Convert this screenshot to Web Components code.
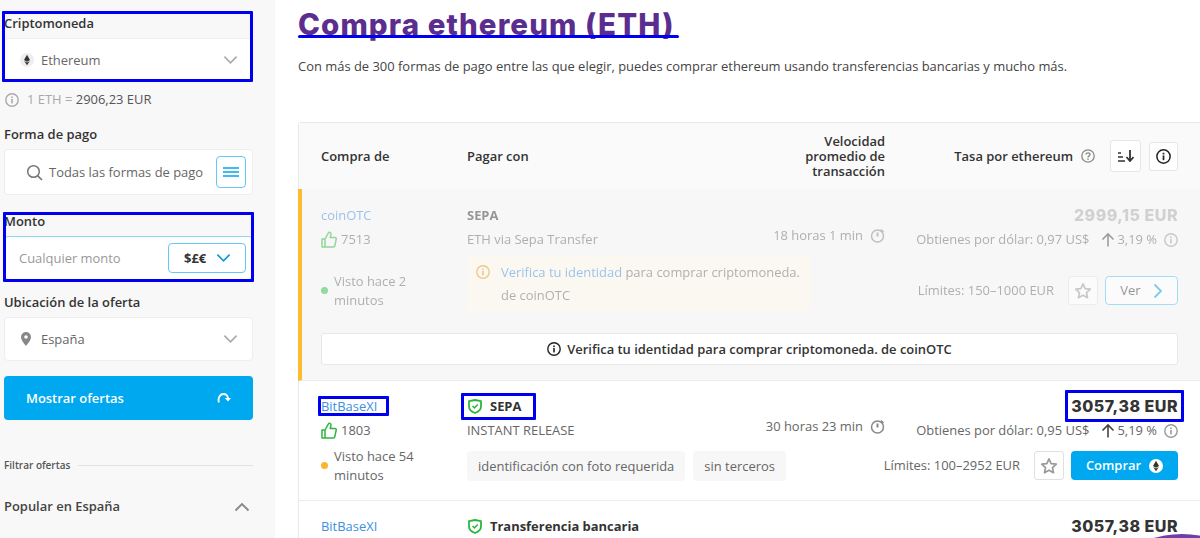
<!DOCTYPE html>
<html lang="es">
<head>
<meta charset="utf-8">
<title>Compra ethereum (ETH)</title>
<style>
  html, body { margin: 0; height: 538px; overflow: hidden; background: #fff; }
  body { font: 12.950px/19px "Open Sans", "Liberation Sans", sans-serif; color: #333; }
</style>
</head>
<body>
<p2p-page>
  <filter-sidebar slot="side"></filter-sidebar>

  <offer-list slot="main">
    <offer-row faded name="coinOTC" score="7513" seen="Visto hace 2 minutos" dot="#25c149"
      method="SEPA" detail="ETH via Sepa Transfer" speed="18 horas 1 min"
      price="2999,15 EUR" usd="0,97 US$" pct="3,19 %" limits="150–1000 EUR" action="Ver">
      <verify-notice slot="extra"></verify-notice>
      <verify-strip slot="strip"></verify-strip>
    </offer-row>
    <offer-row name="BitBaseXI" score="1803" seen="Visto hace 54 minutos" dot="#fbb531"
      shield method="SEPA" detail="INSTANT RELEASE" speed="30 horas 23 min"
      price="3057,38 EUR" usd="0,95 US$" pct="5,19 %" limits="100–2952 EUR" action="Comprar">
      <offer-tag slot="extra">identificación con foto requerida</offer-tag>
      <offer-tag slot="extra">sin terceros</offer-tag>
    </offer-row>
    <!-- only the first line of this row is inside the window -->
    <offer-row name="BitBaseXI" shield method="Transferencia bancaria" price="3057,38 EUR"></offer-row>
  </offer-list>
</p2p-page>

<!-- blue annotation marks drawn over the screenshot -->
<mark-box style="left:2px;top:11px;width:251px;height:71px"></mark-box>
<mark-box style="left:3px;top:212px;width:251px;height:70px"></mark-box>
<mark-box style="left:318px;top:396px;width:71px;height:20px"></mark-box>
<mark-box style="left:461px;top:393px;width:75px;height:27px"></mark-box>
<mark-box style="left:1065px;top:390px;width:119px;height:32px"></mark-box>
<mark-box line style="left:298px;top:35px;width:381px;height:3px"></mark-box>
<chat-blob></chat-blob>

<script>
const ICONS = {
  chevron: (c) => `<svg width="15" height="10" viewBox="0 0 16 10"><path d="M1.500 1.500 8 8l6.500-6.500" fill="none" stroke="${c}" stroke-width="1.800"/></svg>`,
  chevronUp: (c) => `<svg width="16" height="10" viewBox="0 0 16 10"><path d="M1.500 8.500 8 2l6.500 6.500" fill="none" stroke="${c}" stroke-width="1.900"/></svg>`,
  eth: (bg, fg) => `<svg width="14" height="14" viewBox="0 0 14 14"><circle cx="7" cy="7" r="7" fill="${bg}"/><path d="M7 1.800 10 7 7 8.800 4 7z" fill="${fg}"/><path d="M7 9.600 9.800 8 7 12.200 4.200 8z" fill="${fg}"/></svg>`,
  info: (c, s = 14) => `<svg width="${s}" height="${s}" viewBox="0 0 14 14"><circle cx="7" cy="7" r="6.200" fill="none" stroke="${c}" stroke-width="1.400"/><rect x="6.200" y="6" width="1.600" height="4.400" fill="${c}"/><rect x="6.200" y="3.500" width="1.600" height="1.600" fill="${c}"/></svg>`,
  thumb: `<svg width="16" height="17" viewBox="0 0 16 17"><path d="M1 8h3v8H1zM4 8l3.600-6.400c.2-.5 2.400-.6 2.400 1.500 0 1-.4 2.300-.8 3.400h4.600c1 0 1.600.8 1.400 1.700l-1.400 6.600c-.2.8-.7 1.200-1.500 1.200H4" fill="none" stroke="#2cb53e" stroke-width="1.500" stroke-linejoin="round"/></svg>`,
  shield: `<svg width="14" height="15" viewBox="0 0 14 15"><path d="M1 2.200 7 1l6 1.200v5.300c0 3-2.600 5.200-6 6.500-3.400-1.300-6-3.500-6-6.500z" fill="none" stroke="#2cb53e" stroke-width="1.800" stroke-linejoin="round"/><path d="M4.500 7 6.400 8.900 9.700 5.500" fill="none" stroke="#2cb53e" stroke-width="1.500"/></svg>`,
  timer: `<svg width="15" height="15" viewBox="0 0 15 15"><circle cx="7.500" cy="8" r="6" fill="none" stroke="#888" stroke-width="1.500"/><path d="M7.500 4.500V8.500" stroke="#888" stroke-width="2"/><path d="M11 1.500 13.500 4" stroke="#888" stroke-width="1.500"/></svg>`,
  up: `<svg width="14" height="15" viewBox="0 0 14 15"><path d="M7 14.500V2M1.500 7.500 7 2l5.500 5.500" fill="none" stroke="#444" stroke-width="1.600"/></svg>`,
  star: `<svg width="18" height="18" viewBox="0 0 16 16"><path d="M8 1.700 9.900 5.900 14.500 6.400 11.100 9.500 12 14 8 11.700 4 14 4.900 9.500 1.500 6.400 6.100 5.900z" fill="none" stroke="#999" stroke-width="1.500" stroke-linejoin="round"/></svg>`,
  right: `<svg width="10" height="16" viewBox="0 0 10 16"><path d="M1.500 1.500 8 8l-6.500 6.500" fill="none" stroke="#0a9be0" stroke-width="1.800"/></svg>`
};

class MarkBox extends HTMLElement {
  constructor() {
    super();
    this.attachShadow({ mode: "open" });
    this.shadowRoot.innerHTML = `
      <style>
        :host { position: absolute; box-sizing: border-box; border: 3px solid #0000f0; border-radius: 1px; z-index: 10; }
        :host([line]) { border: 0; background: #0000f0; border-radius: 2px; }
      </style>`;
  }
}
customElements.define("mark-box", MarkBox);

class ChatBlob extends HTMLElement {
  constructor() {
    super();
    this.attachShadow({ mode: "open" });
    this.shadowRoot.innerHTML = `
      <style>
        :host { position: absolute; left: 1137px; top: 534px; width: 90px; height: 40px; border-radius: 50%; background: #6f3fa8; z-index: 9; }
      </style>`;
  }
}
customElements.define("chat-blob", ChatBlob);

class P2pPage extends HTMLElement {
  constructor() {
    super();
    this.attachShadow({ mode: "open" });
    this.shadowRoot.innerHTML = `
      <style>
        :host { display: flex; width: 1200px; height: 538px; overflow: hidden; }
        .side { flex: 0 0 275px; background: #f8f8f8; display: block; }
        .main { flex: 1; min-width: 0; padding-left: 23px; }
        h1 {
          margin: 0; height: 48px; color: #5b2d8e;
          font: 800 29.500px/48px Inter, "Liberation Sans", sans-serif; letter-spacing: 1.100px;
        }
        p { margin: 8px 0 46px; line-height: 20px; color: #444; white-space: nowrap; }
      </style>
      <div class="side"><slot name="side"></slot></div>
      <div class="main">
        <h1>Compra ethereum (ETH)</h1>
        <p>Con más de 300 formas de pago entre las que elegir, puedes comprar ethereum usando transferencias bancarias y mucho más.</p>
        <slot name="main"></slot>
      </div>`;
  }
}
customElements.define("p2p-page", P2pPage);

class FilterSidebar extends HTMLElement {
  constructor() {
    super();
    this.attachShadow({ mode: "open" });
    this.shadowRoot.innerHTML = `
      <style>
        :host { display: flex; flex-direction: column; box-sizing: border-box; height: 538px; padding: 14px 22px 0 4px; }
        label { display: block; height: 19px; font-weight: 600; color: #333; }
        .field {
          box-sizing: border-box; display: flex; align-items: center; height: 44px; margin-top: 5px;
          background: #fff; border: 1px solid #eee; border-radius: 4px; color: #666;
        }
        .field svg { flex: none; }
        .coin { padding: 0 14px 0 15px; }
        .coin span, .place span { flex: 1; margin-left: 7px; }
        .rate { display: flex; align-items: center; gap: 8px; height: 19px; margin-top: 8px; padding-left: 1px; color: #aaa; }
        .rate b { font-weight: 400; color: #555; }
        .pay { height: 46px; padding: 0 6px 0 21px; }
        .pay span { flex: 1; margin-left: 6px; white-space: nowrap; }
        .mini {
          box-sizing: border-box; width: 30px; height: 32px; border: 1px solid #66c8f5; border-radius: 4px;
          display: flex; align-items: center; justify-content: center;
        }
        .amount { padding: 0 6px 0 14px; border-color: #8ad8f8; color: #999; }
        .amount span { flex: 1; }
        .cur {
          box-sizing: border-box; width: 78px; height: 30px; border: 1px solid #66c8f5; border-radius: 4px;
          display: flex; align-items: center; justify-content: space-between; padding: 0 14px 0 15px;
          color: #333; font-weight: 700;
        }
        .place { padding: 0 14px 0 16px; }
        .show {
          display: flex; align-items: center; justify-content: space-between; height: 44px; margin-top: 15px; padding: 0 22px;
          background: #00a8ef; color: #fff; font-weight: 600; border-radius: 4px;
        }
        .sep { display: flex; align-items: center; gap: 8px; height: 16px; margin-top: 37px; font-size: 10px; font-weight: 600; color: #555; }
        .sep i { flex: 1; height: 1px; background: #e4e4e4; }
        .pop { display: flex; align-items: center; justify-content: space-between; margin-top: 24px; padding-right: 3px; font-weight: 600; color: #444; }
      </style>
      <label>Criptomoneda</label>
      <div class="field coin">${ICONS.eth("#eee", "#333")}<span>Ethereum</span>${ICONS.chevron("#aaa")}</div>
      <div class="rate">${ICONS.info("#aaa")}<span>1 ETH = <b>2906,23 EUR</b></span></div>
      <label style="margin-top:16px">Forma de pago</label>
      <div class="field pay">
        <svg width="17" height="17" viewBox="0 0 17 17"><circle cx="7.500" cy="7.500" r="5.800" fill="none" stroke="#777" stroke-width="1.500"/><path d="M11.800 11.800 16 16" stroke="#777" stroke-width="1.700"/></svg>
        <span>Todas las formas de pago</span>
        <div class="mini"><svg width="16" height="10" viewBox="0 0 16 10"><path d="M0 1h16M0 5h16M0 9h16" stroke="#00a8ef" stroke-width="1.600"/></svg></div>
      </div>
      <label style="margin-top:17px">Monto</label>
      <div class="field amount"><span>Cualquier monto</span><div class="cur">$£€ ${ICONS.chevron("#0a9be0")}</div></div>
      <label style="margin-top:13px">Ubicación de la oferta</label>
      <div class="field place">
        <svg width="10" height="14" viewBox="0 0 10 14"><path fill-rule="evenodd" d="M5 0a5 5 0 0 1 5 5c0 3.500-5 9-5 9S0 8.500 0 5a5 5 0 0 1 5-5zm0 3.200a1.800 1.800 0 1 0 0 3.600 1.800 1.800 0 0 0 0-3.600z" fill="#888"/></svg>
        <span style="margin-left:10px">España</span>${ICONS.chevron("#aaa")}
      </div>
      <div class="show"><span>Mostrar ofertas</span>
        <svg width="14" height="13" viewBox="0 0 14 13"><path d="M2 10.500C.6 7 2.600 2 6.500 2c2.500 0 4 1.600 4.500 4" fill="none" stroke="#fff" stroke-width="1.800"/><path d="M7.800 6h6.200l-3 3.400z" fill="#fff"/></svg>
      </div>
      <div class="sep"><span>Filtrar ofertas</span><i></i></div>
      <div class="pop"><span>Popular en España</span>${ICONS.chevronUp("#888")}</div>`;
  }
}
customElements.define("filter-sidebar", FilterSidebar);

class OfferList extends HTMLElement {
  constructor() {
    super();
    this.attachShadow({ mode: "open" });
    this.shadowRoot.innerHTML = `
      <style>
        :host { display: block; border-top: 1px solid #e8e8e8; border-top-left-radius: 4px; }
        .head {
          display: grid; grid-template-columns: 146px 418px minmax(0, 1fr); align-items: center;
          height: 66px; padding: 0 22px; border-left: 1px solid #e8e8e8; background: #fafafa;
          font-weight: 600; color: #333;
        }
        .speed { justify-self: end; text-align: right; line-height: 15px; width: 90px; }
        .rate { display: flex; align-items: center; justify-content: flex-end; }
        .q { margin: 0 15px 0 8px; display: flex; }
        .btn {
          box-sizing: border-box; display: flex; align-items: center; justify-content: center;
          width: 29px; height: 29px; background: #fff; border: 1px solid #e6e6e6; border-radius: 3px;
        }
        .sort { width: 31px; height: 32px; margin-right: 8px; }
      </style>
      <div class="head">
        <span>Compra de</span>
        <div style="display:flex;justify-content:space-between;align-items:center"><span>Pagar con</span><span class="speed">Velocidad promedio de transacción</span></div>
        <div class="rate">
          <span>Tasa por ethereum</span>
          <span class="q"><svg width="14" height="14" viewBox="0 0 14 14"><circle cx="7" cy="7" r="6.200" fill="none" stroke="#888" stroke-width="1.300"/><path d="M5 5.500C5 3.300 9 3.300 9 5.500 9 7 7 6.800 7 8.500" fill="none" stroke="#888" stroke-width="1.300"/><rect x="6.300" y="9.500" width="1.400" height="1.400" fill="#888"/></svg></span>
          <span class="btn sort"><svg width="16" height="12" viewBox="0 0 16 12"><path d="M0 3h3M0 7h5M0 11h7" stroke="#333" stroke-width="1.500"/><path d="M12 0v10M8.500 7l3.500 4 3.500-4" fill="none" stroke="#333" stroke-width="1.800"/></svg></span>
          <span class="btn">${ICONS.info("#222", 15)}</span>
        </div>
      </div>
      <slot></slot>`;
  }
}
customElements.define("offer-list", OfferList);

class OfferRow extends HTMLElement {
  connectedCallback() {
    this.attachShadow({ mode: "open" });
    const a = (n) => this.getAttribute(n) || "";
    const isBuy = a("action") === "Comprar";
    const actionBtn = isBuy
      ? `<span class="go">Comprar ${ICONS.eth("#fff", "#333")}</span>`
      : `<span class="go ver">Ver ${ICONS.right}</span>`;
    this.shadowRoot.innerHTML = `
      <style>
        :host {
          display: block; padding: 16px 22px; border-left: 1px solid #e8e8e8; border-bottom: 1px solid #ececec;
          background: #fff; color: #666;
        }
        :host([faded]) { padding: 17px 22px 15px 19px; border-left: 4px solid #fbbc2e; background: #f7f7f7; }
        .cols { display: grid; grid-template-columns: 146px 418px minmax(0, 1fr); }
        :host([faded]) .cols { opacity: .5; }
        .seller { display: flex; flex-direction: column; }
        .name { color: #3d8fe0; }
        .score { display: flex; align-items: center; gap: 4px; margin-top: 5px; height: 19px; }
        .seen { display: flex; align-items: center; gap: 6px; margin-top: auto; padding-top: 7px; line-height: 18.500px; width: 112px; }
        .dot { flex: none; width: 7px; height: 7px; border-radius: 50%; background: var(--dot); }
        .pay { display: grid; grid-template-columns: 1fr auto; grid-template-rows: auto auto; }
        .method { display: flex; align-items: center; gap: 8px; font-weight: 700; color: #333; }
        .method svg { margin-left: 1px; }
        .detail { margin-top: 5px; min-height: 19px; }
        .speed { display: flex; align-items: center; gap: 7px; margin-top: 20px; height: 19px; white-space: nowrap; grid-row: 1; grid-column: 2; }
        .extra { grid-row: 2; grid-column: 1 / 3; margin-top: 7px; display: flex; gap: 8px; }
        :host([faded]) .extra { margin-bottom: -2px; }
        .rate { display: flex; flex-direction: column; align-items: flex-end; }
        .price { font: 800 16px/19px Inter, "Liberation Sans", sans-serif; letter-spacing: .5px; color: #333; white-space: nowrap; }
        :host([faded]) .price { color: #aaa; }
        .usd { display: flex; align-items: center; margin-top: 5px; height: 19px; white-space: nowrap; }
        .usd .up { margin: 0 2px 0 12px; display: flex; }
        .usd .i { margin-left: 7px; display: flex; }
        .acts { display: flex; align-items: center; margin-top: auto; margin-bottom: 4px; white-space: nowrap; }
        .star {
          box-sizing: border-box; width: 30px; height: 29px; margin: 0 7px 0 14px; background: #fff;
          border: 1px solid #e0e0e0; border-radius: 3px; display: flex; align-items: center; justify-content: center;
        }
        .go {
          box-sizing: border-box; height: 29px; border-radius: 4px; display: flex; align-items: center; justify-content: center; gap: 8px;
          width: ${isBuy ? 107 : 73}px; font-weight: 600;
          ${isBuy ? "background:#00a8ef;color:#fff;" : "background:#fff;border:1px solid #4fc0f2;color:#333;"}
        }
        .go.ver { gap: 12px; font-weight: 400; }
      </style>
      <div class="cols" style="--dot:${a("dot")}">
        <div class="seller">
          <span class="name">${a("name")}</span>
          ${a("score") ? `<span class="score">${ICONS.thumb}${a("score")}</span>
          <span class="seen"><i class="dot"></i><span>${a("seen")}</span></span>` : ""}
        </div>
        <div class="pay">
          <div>
            <div class="method">${this.hasAttribute("shield") ? ICONS.shield : ""}${a("method")}</div>
            ${a("detail") ? `<div class="detail">${a("detail")}</div>` : ""}
          </div>
          ${a("speed") ? `<div class="speed">${a("speed")} ${ICONS.timer}</div>` : ""}
          <div class="extra"><slot name="extra"></slot></div>
        </div>
        <div class="rate">
          <div class="price">${a("price")}</div>
          ${a("usd") ? `<div class="usd">Obtienes por dólar: ${a("usd")}<span class="up">${ICONS.up}</span>${a("pct")}<span class="i">${ICONS.info("#999")}</span></div>
          <div class="acts">Límites: ${a("limits")}<span class="star">${ICONS.star}</span>${actionBtn}</div>` : ""}
        </div>
      </div>
      <slot name="strip"></slot>`;
  }
}
customElements.define("offer-row", OfferRow);

class OfferTag extends HTMLElement {
  constructor() {
    super();
    this.attachShadow({ mode: "open" });
    this.shadowRoot.innerHTML = `
      <style>
        :host { display: block; height: 30px; padding: 0 11px; line-height: 30px; background: #f7f7f7; border-radius: 4px; color: #666; white-space: nowrap; }
      </style>
      <slot></slot>`;
  }
}
customElements.define("offer-tag", OfferTag);

class VerifyNotice extends HTMLElement {
  constructor() {
    super();
    this.attachShadow({ mode: "open" });
    this.shadowRoot.innerHTML = `
      <style>
        :host { display: flex; box-sizing: border-box; width: 344px; height: 55px; padding: 5px 9px; gap: 11px; background: #fff9eb; border-radius: 4px; line-height: 23px; color: #666; }
        svg { flex: none; margin-top: 4px; }
        a { color: #3d8fe0; }
      </style>
      ${ICONS.info("#e69a17", 14)}
      <span><a>Verifica tu identidad</a> para comprar criptomoneda. de coinOTC</span>`;
  }
}
customElements.define("verify-notice", VerifyNotice);

class VerifyStrip extends HTMLElement {
  constructor() {
    super();
    this.attachShadow({ mode: "open" });
    this.shadowRoot.innerHTML = `
      <style>
        :host {
          display: flex; align-items: center; justify-content: center; gap: 6px; box-sizing: border-box;
          height: 32px; margin-top: 24px; background: #fff; border: 1px solid #e8e8e8; border-radius: 3px;
          font-weight: 600; color: #333;
        }
      </style>
      ${ICONS.info("#222", 14)}<span>Verifica tu identidad para comprar criptomoneda. de coinOTC</span>`;
  }
}
customElements.define("verify-strip", VerifyStrip);
</script>
</body>
</html>
